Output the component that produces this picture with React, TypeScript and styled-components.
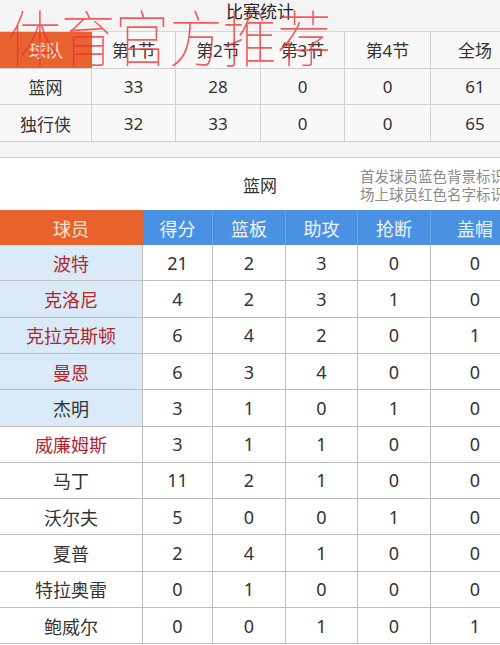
import React from "react";
import styled, { createGlobalStyle } from "styled-components";

const quarters = ["第1节", "第2节", "第3节", "第4节", "全场"];

const teamScores: Array<{ team: string; scores: number[] }> = [
  { team: "篮网", scores: [33, 28, 0, 0, 61] },
  { team: "独行侠", scores: [32, 33, 0, 0, 65] },
];

const statHeads = ["得分", "篮板", "助攻", "抢断", "盖帽"];

type Player = { name: string; starter?: boolean; onCourt?: boolean; stats: number[] };

const players: Player[] = [
  { name: "波特", starter: true, onCourt: true, stats: [21, 2, 3, 0, 0] },
  { name: "克洛尼", starter: true, onCourt: true, stats: [4, 2, 3, 1, 0] },
  { name: "克拉克斯顿", starter: true, onCourt: true, stats: [6, 4, 2, 0, 1] },
  { name: "曼恩", starter: true, onCourt: true, stats: [6, 3, 4, 0, 0] },
  { name: "杰明", starter: true, stats: [3, 1, 0, 1, 0] },
  { name: "威廉姆斯", onCourt: true, stats: [3, 1, 1, 0, 0] },
  { name: "马丁", stats: [11, 2, 1, 0, 0] },
  { name: "沃尔夫", stats: [5, 0, 0, 1, 0] },
  { name: "夏普", stats: [2, 4, 1, 0, 0] },
  { name: "特拉奥雷", stats: [0, 1, 0, 0, 0] },
  { name: "鲍威尔", stats: [0, 0, 1, 0, 1] },
];

export default function App() {
  return (
    <>
      <GlobalStyle />
      <Page>
        <Watermark>体育官方推荐</Watermark>
        <Summary>
          <Title>比赛统计</Title>
          <ScoreGrid>
            <HeadCell>球队</HeadCell>
            {quarters.map((q) => (
              <ScoreCell key={q}>{q}</ScoreCell>
            ))}
            {teamScores.map((row) => (
              <React.Fragment key={row.team}>
                <ScoreCell>{row.team}</ScoreCell>
                {row.scores.map((s, i) => (
                  <ScoreCell key={i}>{s}</ScoreCell>
                ))}
              </React.Fragment>
            ))}
          </ScoreGrid>
        </Summary>

        <TeamBar>
          <span />
          <TeamName>篮网</TeamName>
          <Notes>
            <div>首发球员蓝色背景标识</div>
            <div>场上球员红色名字标识</div>
          </Notes>
        </TeamBar>

        <StatGrid>
          <StatHead $orange>球员</StatHead>
          {statHeads.map((h) => (
            <StatHead key={h}>{h}</StatHead>
          ))}
          {players.map((p) => (
            <React.Fragment key={p.name}>
              <NameCell $starter={p.starter} $onCourt={p.onCourt}>
                {p.name}
              </NameCell>
              {p.stats.map((v, i) => (
                <StatCell key={i}>{v}</StatCell>
              ))}
            </React.Fragment>
          ))}
        </StatGrid>
      </Page>
    </>
  );
}

const GlobalStyle = createGlobalStyle`
  html, body {
    margin: 0;
    padding: 0;
    background: #ffffff;
    overflow: hidden;
  }
  body {
    font-family: "Noto Sans", "Noto Sans CJK SC", sans-serif;
    color: #333333;
  }
`;

const Page = styled.div`
  position: relative;
  width: 520px;
`;

// overlay stamp across the top of the page
const Watermark = styled.div`
  position: absolute;
  left: 7px;
  top: -10px;
  font-family: "Noto Sans CJK SC", sans-serif;
  font-weight: 100;
  font-size: 54px;
  color: rgba(238, 52, 56, 0.8);
  pointer-events: none;
  white-space: nowrap;
  transform: scaleY(1.14);
  transform-origin: top left;
  z-index: 2;
`;

const Summary = styled.section`
  background: #f4f4f4;
  padding-bottom: 15px;
  border-bottom: 1px solid #cfcfcf;
`;

const Title = styled.div`
  height: 31px;
  line-height: 24px;
  text-align: center;
  font-size: 17px;
  color: #222222;
`;

const ScoreGrid = styled.div`
  display: grid;
  grid-template-columns: 92px 84px 85px 84px 86px 89px;
  grid-auto-rows: 36.7px;
  border-top: 1px solid #d6d6d6;
`;

const ScoreCell = styled.div`
  display: flex;
  align-items: center;
  justify-content: center;
  font-size: 17px;
  color: #333333;
  background: #f8f8f8;
  border-right: 1px solid #d2d2d2;
  border-bottom: 1px solid #d2d2d2;
  box-sizing: border-box;
`;

const HeadCell = styled(ScoreCell)`
  background: #e8632f;
  color: #fde3cf;
  border-right: none;
`;

const TeamBar = styled.div`
  display: grid;
  grid-template-columns: 180px 160px 1fr;
  align-items: center;
  height: 52px;
  background: #ffffff;
`;

const TeamName = styled.div`
  text-align: center;
  font-size: 17px;
  color: #333333;
`;

const Notes = styled.div`
  padding-left: 20px;
  padding-top: 2px;
  font-size: 14.5px;
  line-height: 18px;
  color: #8a8a8a;
  white-space: nowrap;
`;

const StatGrid = styled.div`
  display: grid;
  grid-template-columns: 143px 70px 73px 72px 73px 89px;
  grid-template-rows: 35px;
  grid-auto-rows: 36.3px;
`;

const StatHead = styled.div<{ $orange?: boolean }>`
  display: flex;
  align-items: center;
  justify-content: center;
  font-size: 18px;
  background: ${(p) => (p.$orange ? "#e8622e" : "#4b91e3")};
  color: ${(p) => (p.$orange ? "#fde3cf" : "#eef5fd")};
  border-right: 1px solid ${(p) => (p.$orange ? "#e8622e" : "#6aa3e8")};
  box-sizing: border-box;
`;

const StatCell = styled.div`
  display: flex;
  align-items: center;
  justify-content: center;
  font-size: 18px;
  color: #333333;
  background: #ffffff;
  border-right: 1px solid #bdbdbd;
  border-bottom: 1px solid #bdbdbd;
  box-sizing: border-box;
`;

const NameCell = styled(StatCell)<{ $starter?: boolean; $onCourt?: boolean }>`
  background: ${(p) => (p.$starter ? "#dbeaf8" : "#ffffff")};
  color: ${(p) => (p.$onCourt ? "#b1262c" : "#333333")};
`;
